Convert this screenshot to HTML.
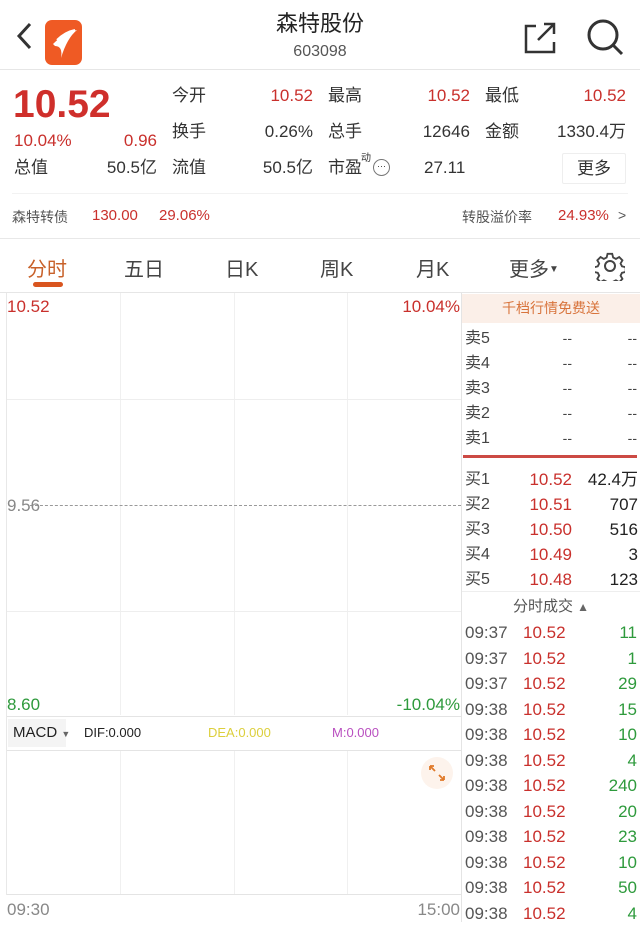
<!DOCTYPE html>
<html><head><meta charset="utf-8"><style>
*{margin:0;padding:0;box-sizing:border-box}
body{width:640px;height:922px;overflow:hidden;background:#fff;font-family:"Liberation Sans","Noto Sans CJK SC",sans-serif;color:#333;position:relative}
.a{position:absolute;white-space:nowrap}
.r{color:#c9302c}.g{color:#2e9a3c}.gr{color:#888}
.rt{text-align:right}
.f16{font-size:17px;line-height:20px}
.hl{position:absolute;height:1px;background:#eee}
.vl{position:absolute;width:1px;background:#f0f0f0}
</style></head><body>
<!-- header -->
<svg class="a" style="left:12px;top:20px" width="24" height="32" viewBox="0 0 24 32"><path d="M18 4 L7 16 L18 28" fill="none" stroke="#333" stroke-width="3"/></svg>
<div class="a" style="left:45px;top:20px;width:37px;height:45px;background:#ef5a24;border-radius:7px"></div>
<svg class="a" style="left:45px;top:20px" width="37" height="45" viewBox="0 0 37 45"><path d="M8 24 Q20 12 32 10 Q22 18 16 38 Q18 26 10 26Z" fill="#fff"/><path d="M12 20 Q20 12 30 10" stroke="#fff" stroke-width="2" fill="none"/></svg>
<div class="a" style="left:0;width:640px;top:6px;text-align:center;font-size:22px;color:#222">森特股份</div>
<div class="a" style="left:0;width:640px;top:43px;text-align:center;font-size:16px;color:#555">603098</div>
<svg class="a" style="left:522px;top:20px" width="36" height="36" viewBox="0 0 36 36"><path d="M14 6 H4 V32 H32 V22" fill="none" stroke="#333" stroke-width="2.5"/><path d="M16 20 L32 4 M22 4 H32 V14" fill="none" stroke="#333" stroke-width="2.5"/></svg>
<svg class="a" style="left:585px;top:17px" width="40" height="40" viewBox="0 0 40 40"><circle cx="18" cy="18" r="14" fill="none" stroke="#333" stroke-width="3"/><path d="M28 28 L37 37" stroke="#333" stroke-width="3"/></svg>
<div class="hl" style="left:0;top:69px;width:640px;background:#e6e6e6"></div>
<!-- quote -->
<div class="a r" style="left:13px;top:83px;font-size:39px;font-weight:bold;color:#cf2f2b">10.52</div>
<div class="a r f16" style="left:14px;top:131px">10.04%</div>
<div class="a r f16 rt" style="left:100px;width:57px;top:131px">0.96</div>
<div class="a f16" style="left:14px;top:158px">总值</div>
<div class="a f16 rt" style="left:90px;width:67px;top:158px">50.5亿</div>
<div class="a f16" style="left:172px;top:86px">今开</div><div class="a f16 r rt" style="left:240px;width:73px;top:86px">10.52</div>
<div class="a f16" style="left:328px;top:86px">最高</div><div class="a f16 r rt" style="left:400px;width:70px;top:86px">10.52</div>
<div class="a f16" style="left:485px;top:86px">最低</div><div class="a f16 r rt" style="left:556px;width:70px;top:86px">10.52</div>
<div class="a f16" style="left:172px;top:122px">换手</div><div class="a f16 rt" style="left:240px;width:73px;top:122px">0.26%</div>
<div class="a f16" style="left:328px;top:122px">总手</div><div class="a f16 rt" style="left:400px;width:70px;top:122px">12646</div>
<div class="a f16" style="left:485px;top:122px">金额</div><div class="a f16 rt" style="left:530px;width:96px;top:122px">1330.4万</div>
<div class="a f16" style="left:172px;top:158px">流值</div><div class="a f16 rt" style="left:240px;width:73px;top:158px">50.5亿</div>
<div class="a f16" style="left:328px;top:158px">市盈</div><div class="a" style="left:361px;top:149px;font-size:10px">动</div>
<div class="a" style="left:373px;top:159px;width:17px;height:17px;border:1px solid #777;border-radius:50%;font-size:9px;text-align:center;line-height:12px">···</div>
<div class="a f16" style="left:424px;top:158px">27.11</div>
<div class="a" style="left:562px;top:153px;width:64px;height:31px;border:1px solid #eee;text-align:center;line-height:29px;border-radius:2px;font-size:17px">更多</div>
<div class="hl" style="left:12px;top:193px;width:616px;background:#f2f2f2"></div>
<div class="a" style="left:12px;top:207px;font-size:14px;color:#555">森特转债</div>
<div class="a r" style="left:92px;top:207px;font-size:15px">130.00</div>
<div class="a r" style="left:159px;top:207px;font-size:15px">29.06%</div>
<div class="a" style="left:462px;top:207px;font-size:14px;color:#555">转股溢价率</div>
<div class="a r" style="left:558px;top:207px;font-size:15px">24.93%</div>
<div class="a" style="left:618px;top:207px;font-size:14px;color:#555">&gt;</div>
<div class="hl" style="left:0;top:238px;width:640px;background:#e8e8e8"></div>
<!-- tabs -->
<div class="a" style="left:27px;top:253px;font-size:20px;color:#c8612a">分时</div>
<div class="a" style="left:33px;top:282px;width:30px;height:5px;border-radius:3px;background:#d9551f"></div>
<div class="a" style="left:124px;top:253px;font-size:20px;color:#444">五日</div>
<div class="a" style="left:225px;top:253px;font-size:20px;color:#444">日K</div>
<div class="a" style="left:320px;top:253px;font-size:20px;color:#444">周K</div>
<div class="a" style="left:416px;top:253px;font-size:20px;color:#444">月K</div>
<div class="a" style="left:509px;top:253px;font-size:20px;color:#444">更多<span style="font-size:10px;vertical-align:4px">▼</span></div>
<svg class="a" style="left:595px;top:251px" width="30" height="30" viewBox="0 0 30 30"><path d="M12.5 2h5l1 4 3 1.5 3.5-2 3.5 3.5-2 3.5 1.5 3 4 1v5l-4 1-1.5 3 2 3.5-3.5 3.5-3.5-2-3 1.5-1 4h-5l-1-4-3-1.5-3.5 2-3.5-3.5 2-3.5-1.5-3-4-1v-5l4-1 1.5-3-2-3.5 3.5-3.5 3.5 2 3-1.5z" transform="scale(0.93) translate(1,1)" fill="none" stroke="#444" stroke-width="2"/><circle cx="15" cy="15" r="5" fill="none" stroke="#444" stroke-width="2"/></svg>
<div class="hl" style="left:0;top:292px;width:640px;background:#e6e6e6"></div>
<!-- chart -->
<div class="vl" style="left:6px;top:293px;height:602px;background:#e8e8e8"></div>
<div class="vl" style="left:120px;top:293px;height:422px"></div>
<div class="vl" style="left:234px;top:293px;height:422px"></div>
<div class="vl" style="left:347px;top:293px;height:422px"></div>
<div class="vl" style="left:120px;top:750px;height:144px"></div>
<div class="vl" style="left:234px;top:750px;height:144px"></div>
<div class="vl" style="left:347px;top:750px;height:144px"></div>
<div class="hl" style="left:7px;top:399px;width:454px"></div>
<div class="hl" style="left:7px;top:611px;width:454px"></div>
<div class="a" style="left:30px;top:505px;width:431px;border-top:1px dashed #999"></div>
<div class="hl" style="left:7px;top:716px;width:454px;background:#e4e4e4"></div>
<div class="hl" style="left:7px;top:750px;width:454px;background:#e4e4e4"></div>
<div class="hl" style="left:7px;top:894px;width:454px;background:#e4e4e4"></div>
<div class="a r f16" style="left:7px;top:297px">10.52</div>
<div class="a r f16 rt" style="left:380px;width:80px;top:297px">10.04%</div>
<div class="a gr f16" style="left:7px;top:496px">9.56</div>
<div class="a g f16" style="left:7px;top:695px">8.60</div>
<div class="a g f16 rt" style="left:370px;width:90px;top:695px">-10.04%</div>
<div class="a" style="left:8px;top:719px;width:58px;height:28px;background:#f4f4f4;font-size:15px;color:#222;line-height:28px;padding-left:5px">MACD <span style="font-size:9px;color:#666">▼</span></div>
<div class="a" style="left:84px;top:725px;font-size:13px;color:#222">DIF:0.000</div>
<div class="a" style="left:208px;top:725px;font-size:13px;color:#dccf3c">DEA:0.000</div>
<div class="a" style="left:332px;top:725px;font-size:13px;color:#b94fc0">M:0.000</div>
<div class="a" style="left:421px;top:757px;width:32px;height:32px;border-radius:50%;background:#fdf3ec"></div>
<svg class="a" style="left:427px;top:763px" width="20" height="20" viewBox="0 0 20 20"><path d="M3 3 L8 8 M3 3 H7 M3 3 V7 M17 17 L12 12 M17 17 H13 M17 17 V13" stroke="#e07a2a" stroke-width="1.8" fill="none"/></svg>
<div class="a gr f16" style="left:7px;top:900px">09:30</div>
<div class="a gr f16 rt" style="left:400px;width:60px;top:900px">15:00</div>
<!-- right panel -->
<div class="vl" style="left:461px;top:293px;height:629px;background:#e4e4e4"></div>
<div class="a" style="left:462px;top:294px;width:178px;height:29px;background:#fbefe8;color:#d8743c;font-size:14px;text-align:center;line-height:29px">千档行情免费送</div>
<div style="position:absolute;left:465px;top:326px;font-size:16px;line-height:25px;color:#444">卖5<br>卖4<br>卖3<br>卖2<br>卖1</div>
<div style="position:absolute;left:540px;width:32px;top:326px;font-size:14px;line-height:25px;color:#444;text-align:right">--<br>--<br>--<br>--<br>--</div>
<div style="position:absolute;left:600px;width:37px;top:326px;font-size:14px;line-height:25px;color:#444;text-align:right">--<br>--<br>--<br>--<br>--</div>
<div class="a" style="left:463px;top:455px;width:174px;height:3px;background:#cc4a44"></div>
<div style="position:absolute;left:465px;top:467px;font-size:16px;line-height:25px;color:#444">买1<br>买2<br>买3<br>买4<br>买5</div>
<div class="r" style="position:absolute;left:510px;width:62px;top:467px;font-size:17px;line-height:25px;text-align:right">10.52<br>10.51<br>10.50<br>10.49<br>10.48</div>
<div style="position:absolute;left:572px;width:66px;top:467px;font-size:17px;line-height:25px;color:#222;text-align:right">42.4万<br>707<br>516<br>3<br>123</div>
<div class="hl" style="left:462px;top:591px;width:178px"></div>
<div class="a" style="left:462px;width:178px;top:595px;text-align:center;font-size:15px;color:#555">分时成交 <span style="font-size:12px;color:#666">▲</span></div>
<div style="position:absolute;left:465px;top:620px;font-size:17px;line-height:25.5px;color:#555">09:37<br>09:37<br>09:37<br>09:38<br>09:38<br>09:38<br>09:38<br>09:38<br>09:38<br>09:38<br>09:38<br>09:38</div>
<div class="r" style="position:absolute;left:523px;top:620px;font-size:17px;line-height:25.5px">10.52<br>10.52<br>10.52<br>10.52<br>10.52<br>10.52<br>10.52<br>10.52<br>10.52<br>10.52<br>10.52<br>10.52</div>
<div class="g" style="position:absolute;left:590px;width:47px;top:620px;font-size:17px;line-height:25.5px;text-align:right">11<br>1<br>29<br>15<br>10<br>4<br>240<br>20<br>23<br>10<br>50<br>4</div>
</body></html>
